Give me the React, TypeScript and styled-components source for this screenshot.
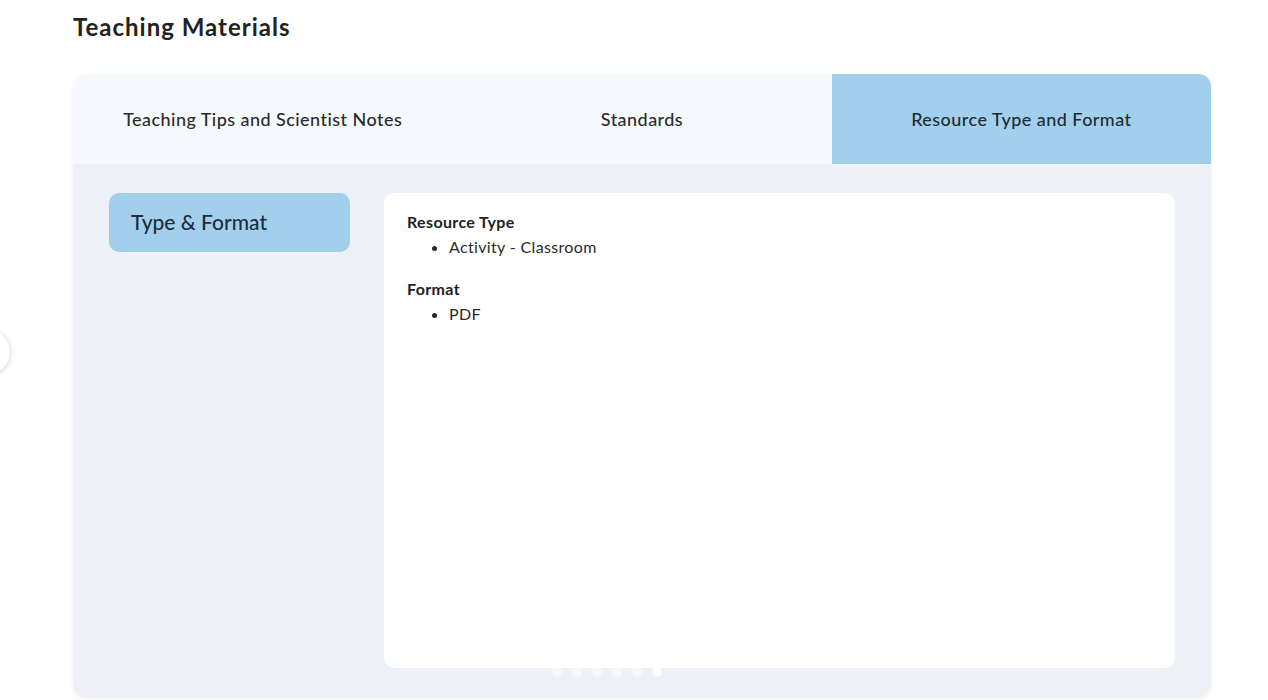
import React, { useState } from 'react';
import styled, { createGlobalStyle, css } from 'styled-components';

const GlobalStyle = createGlobalStyle`
  html, body {
    margin: 0;
    padding: 0;
    background: #ffffff;
    font-family: Lato, "Noto Sans", sans-serif;
    color: #222222;
  }
`;

const tabs = ['Teaching Tips and Scientist Notes', 'Standards', 'Resource Type and Format'];

const App = () => {
  const [active, setActive] = useState(2);

  return (
    <>
      <GlobalStyle />
      <Page>
        <PrevArrow aria-label="previous" />
        <Title>Teaching Materials</Title>
        <Card>
          <TabBar>
            {tabs.map((label, i) => (
              <Tab key={label} active={i === active} onClick={() => setActive(i)}>
                {label}
              </Tab>
            ))}
          </TabBar>
          <Body>
            <Sidebar>
              <SideButton>Type &amp; Format</SideButton>
            </Sidebar>
            <Panel>
              <Section>
                <Heading>Resource Type</Heading>
                <List>
                  <li>Activity - Classroom</li>
                </List>
              </Section>
              <Section>
                <Heading>Format</Heading>
                <List>
                  <li>PDF</li>
                </List>
              </Section>
            </Panel>
            <Dots>
              {[0, 1, 2, 3, 4, 5].map((d) => (
                <Dot key={d} current={d === 5} />
              ))}
            </Dots>
          </Body>
        </Card>
      </Page>
    </>
  );
};

export default App;

const Page = styled.div`
  position: relative;
  width: 1268px;
  height: 700px;
  box-sizing: border-box;
  padding: 10px 57px 0 73px;
  overflow: hidden;
`;

const PrevArrow = styled.div`
  position: absolute;
  left: -34px;
  top: 330px;
  width: 44px;
  height: 44px;
  border-radius: 50%;
  background: #ffffff;
  box-shadow: 0 1px 6px rgba(0, 0, 0, 0.18);
`;

const Title = styled.h2`
  margin: 0;
  font-size: 24px;
  font-weight: 700;
  line-height: 34px;
  color: #222222;
  letter-spacing: 1px;
`;

const Card = styled.div`
  margin-top: 30px;
  width: 1138px;
  border-radius: 12px;
  overflow: hidden;
  box-shadow: 0 2px 4px rgba(30, 40, 70, 0.06);
`;

const TabBar = styled.div`
  display: grid;
  grid-template-columns: repeat(3, 1fr);
  height: 90px;
  background: #f6f9fd;
`;

const Tab = styled.button<{ active: boolean }>`
  border: none;
  background: transparent;
  font-family: inherit;
  font-size: 18px;
  font-weight: 500;
  letter-spacing: 0.45px;
  color: #2b2b2b;
  cursor: pointer;
  padding: 0;
  ${(props) =>
    props.active &&
    css`
      background: #a2d0ec;
      color: #1f2a36;
      border-top-right-radius: 12px;
    `}
`;

const Body = styled.div`
  position: relative;
  display: flex;
  gap: 34px;
  height: 533px;
  box-sizing: border-box;
  padding: 29px 36px;
  background: #edf0f7;
`;

const Sidebar = styled.div`
  width: 241px;
  flex-shrink: 0;
`;

const SideButton = styled.div`
  height: 59px;
  box-sizing: border-box;
  padding: 16px 22px 0;
  border-radius: 10px;
  background: #a2d0ec;
  font-size: 21px;
  font-weight: 500;
  color: #1f2d3a;
`;

const Panel = styled.div`
  flex: 1;
  background: #ffffff;
  border-radius: 10px;
  padding: 19px 23px;
`;

const Section = styled.div`
  margin-bottom: 22px;
`;

const Heading = styled.div`
  font-size: 16px;
  font-weight: 700;
  line-height: 20px;
  letter-spacing: 0.35px;
  color: #222222;
`;

const List = styled.ul`
  margin: 5px 0 0;
  padding-left: 42px;
  font-size: 16px;
  line-height: 20px;
  letter-spacing: 0.35px;
  color: #2a2a2a;
`;

const Dots = styled.div`
  position: absolute;
  left: 479px;
  bottom: 20px;
  display: flex;
  gap: 10px;
`;

const Dot = styled.span<{ current: boolean }>`
  width: 10px;
  height: 10px;
  border-radius: 50%;
  background: ${(props) => (props.current ? '#ffffff' : 'rgba(255, 255, 255, 0.55)')};
`;
